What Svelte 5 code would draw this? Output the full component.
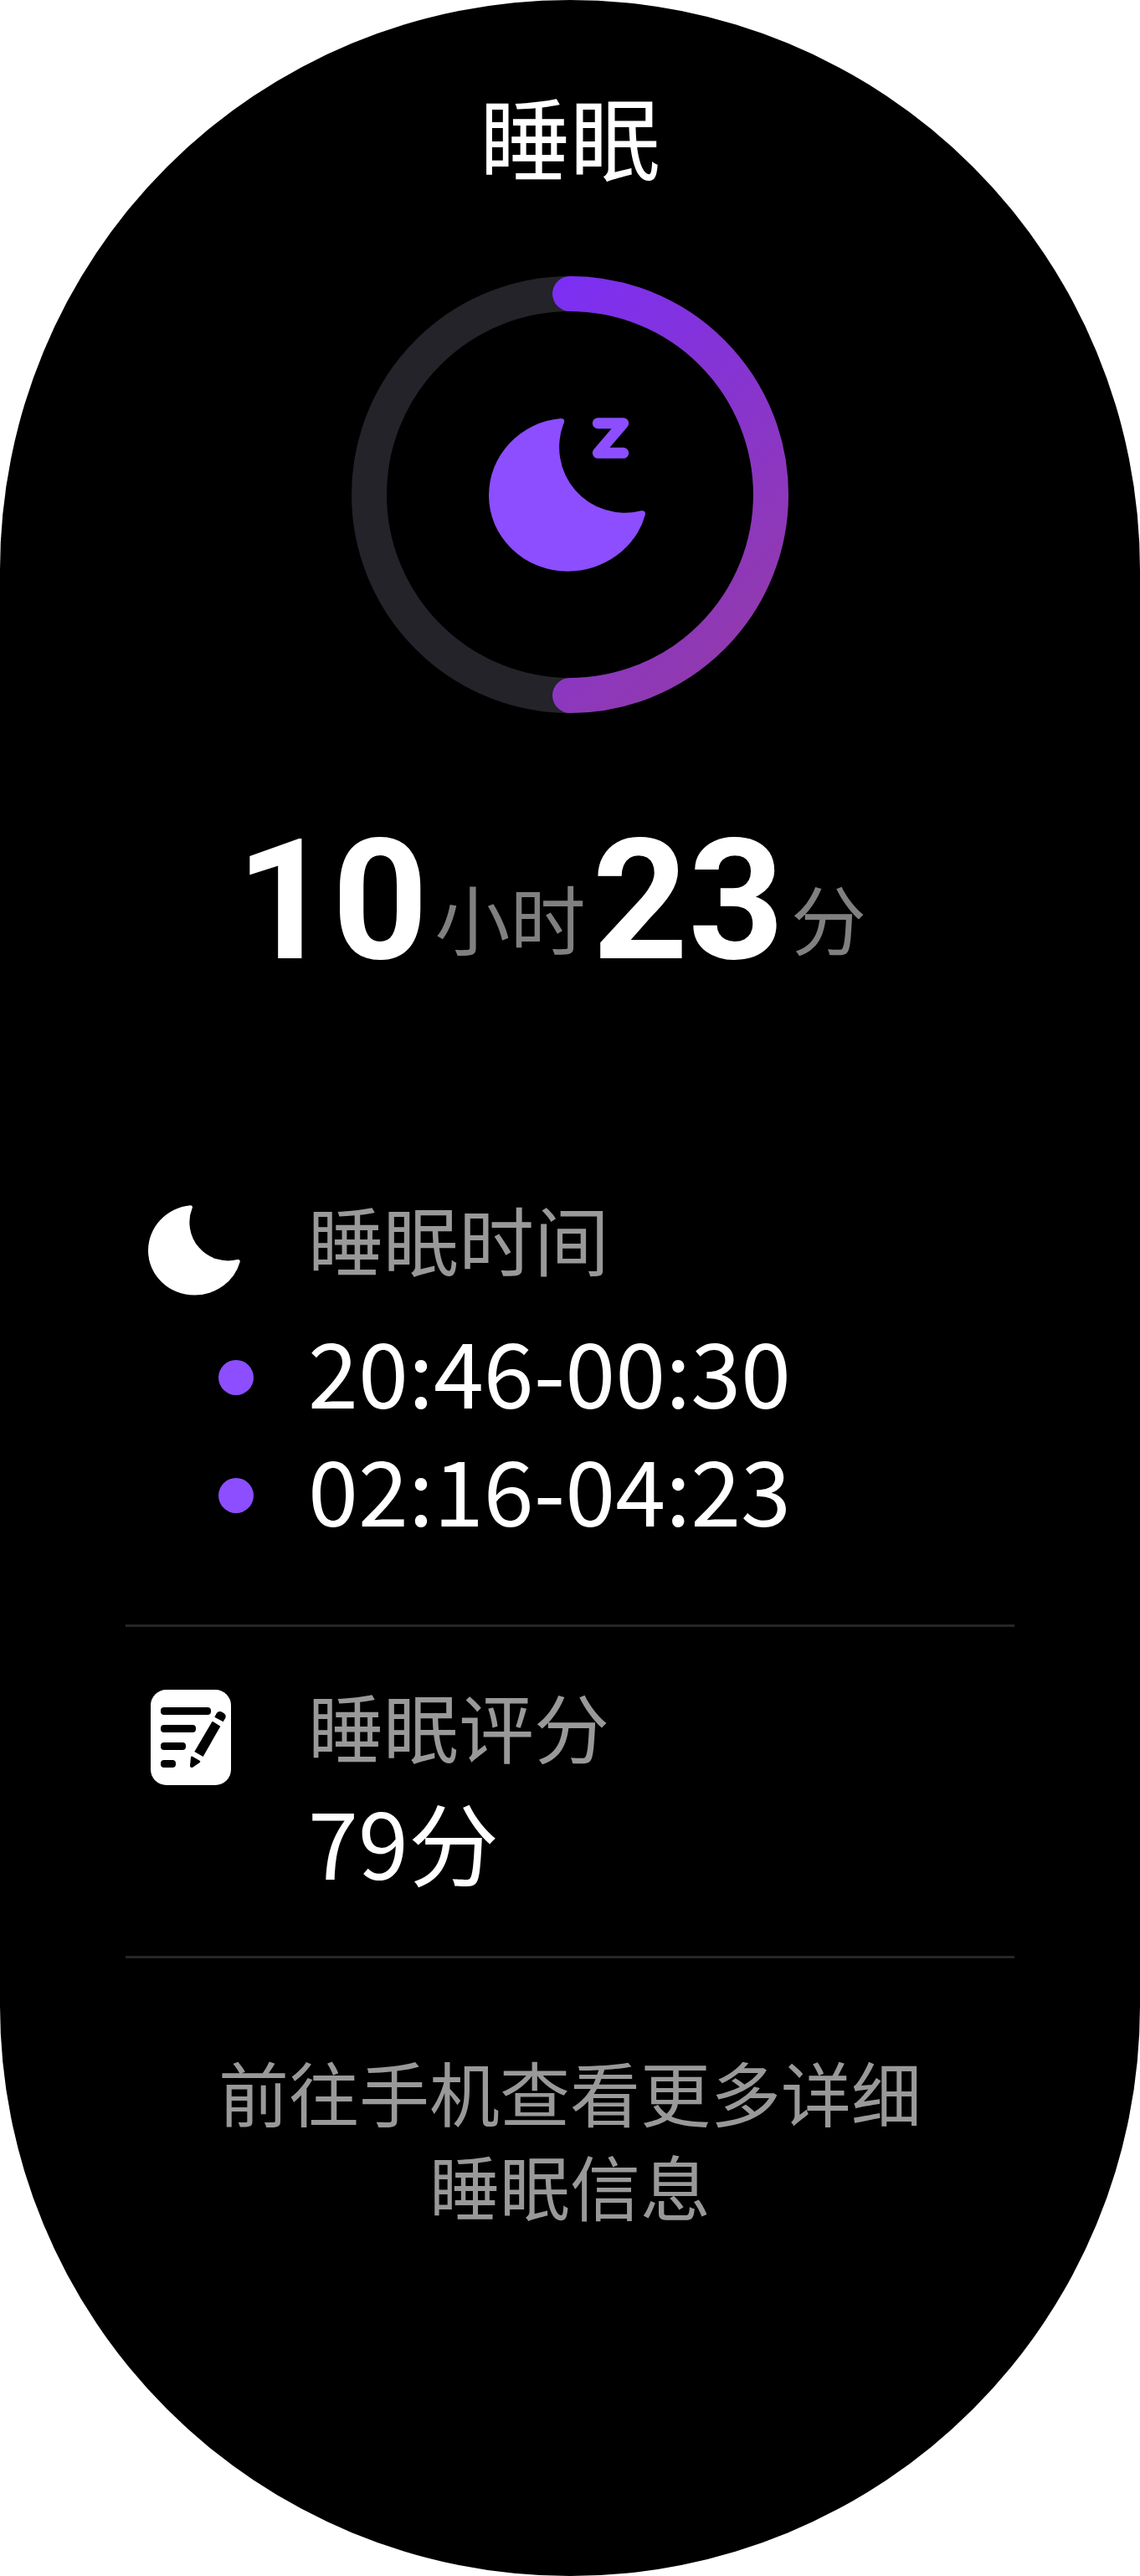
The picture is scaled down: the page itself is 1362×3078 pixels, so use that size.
<script>
  const periods = ['20:46-00:30', '02:16-04:23'];
</script>

{#snippet crescent()}
  <path
    d="M330 60Q345 60 342 74A235 235 0 0 0 617 391Q634 388 633 404A288 272 0 0 1 355 608A283 272 0 0 1 72 336A283 277 0 0 1 330 60Z"
  />
{/snippet}

<main class="watch">
  <h1>睡眠</h1>

  <svg class="ring" viewBox="0 0 522 522" role="img" aria-label="睡眠">
    <defs>
      <linearGradient id="progress" gradientUnits="userSpaceOnUse" x1="240" y1="0" x2="565" y2="325">
        <stop offset="0" stop-color="#7b2ff5" />
        <stop offset="1" stop-color="#9139b0" />
      </linearGradient>
    </defs>
    <circle class="track" cx="261" cy="261" r="240" />
    <path class="progress" d="M261 21A240 240 0 0 1 261 501" stroke="url(#progress)" />
    <g class="sleep" transform="translate(140 150) scale(.33333)">
      {@render crescent()}
      <path class="zed" d="M463 77H554L463 184H554" />
    </g>
  </svg>

  <p class="duration">
    <strong>10</strong><span>小时</span><strong>23</strong><span>分</span>
  </p>

  <section class="times">
    <svg class="icon" viewBox="72 60 562 549" aria-hidden="true">{@render crescent()}</svg>
    <div class="body">
      <h2>睡眠时间</h2>
      <ul>
        {#each periods as period}
          <li>{period}</li>
        {/each}
      </ul>
    </div>
  </section>

  <section class="score">
    <svg class="icon" viewBox="51 57 330 342" aria-hidden="true">
      <rect x="60" y="57" width="288" height="342" rx="56" />
      <g class="ink">
        <rect x="96" y="120" width="180" height="27" rx="12" />
        <rect x="96" y="183" width="126" height="27" rx="12" />
        <rect x="96" y="246" width="90" height="27" rx="12" />
        <rect x="96" y="309" width="54" height="27" rx="12" />
        <path d="M281 170L310 188L248 297L217 279Z" />
        <path d="M289 155L296 142Q302 133 313 136L322 141Q332 148 328 158L320 172Z" />
        <path d="M204 298Q206 294 211 297L238 313L237 317L211 335Q201 338 201 330Z" />
      </g>
    </svg>
    <div class="body">
      <h2>睡眠评分</h2>
      <p>79分</p>
    </div>
  </section>

  <p class="hint">前往手机查看更多详细睡眠信息</p>
</main>

<style>
  :global(body) {
    margin: 0;
    background: #fff;
  }

  .watch {
    box-sizing: border-box;
    display: flex;
    flex-direction: column;
    min-height: 100vh;
    padding: 91px 150px 380px;
    border-radius: 681px;
    background: #000;
    color: #fff;
    font-family: 'Noto Sans CJK SC', sans-serif;
  }

  h1,
  h2,
  p,
  ul {
    margin: 0;
    padding: 0;
    font-weight: 400;
  }

  h1 {
    font-size: 108px;
    line-height: 141px;
    text-align: center;
  }

  .ring {
    width: 522px;
    margin: 98px auto 0;
  }

  .track,
  .progress {
    fill: none;
    stroke-width: 42;
    stroke-linecap: round;
  }

  .track {
    stroke: #232329;
  }

  .sleep {
    fill: #8c4eff;
  }

  .zed {
    fill: none;
    stroke: #8c4eff;
    stroke-width: 39;
    stroke-linecap: round;
    stroke-linejoin: round;
  }

  .duration {
    display: flex;
    justify-content: center;
    align-items: flex-end;
    gap: 8px;
    margin-top: 146px;
    padding-right: 45px;
  }

  .duration strong {
    font-family: Roboto, sans-serif;
    font-size: 200px;
    font-weight: 700;
    line-height: 157px;
  }

  .duration span {
    color: #808080;
    font-size: 90px;
    line-height: 120px;
  }

  section {
    display: flex;
    border-bottom: 3px solid #262626;
  }

  .times {
    margin-top: 264px;
    padding-bottom: 93px;
  }

  .score {
    padding: 57px 0 67px;
  }

  .icon {
    width: 110px;
    height: 114px;
    margin: 18px 81px 0 27px;
    fill: #fff;
  }

  .ink {
    fill: #000;
  }

  h2 {
    color: #999;
    font-size: 90px;
    line-height: 120px;
  }

  ul {
    margin-top: 27px;
    list-style: none;
  }

  li,
  .score p {
    font-size: 108px;
    line-height: 141px;
  }

  li {
    display: flex;
    align-items: center;
  }

  li::before {
    content: '';
    width: 42px;
    height: 42px;
    margin: 18px 65px 0 -107px;
    border-radius: 50%;
    background: #8c4eff;
  }

  .score p {
    margin-top: 8px;
  }

  .hint {
    width: 100%;
    max-width: 880px;
    margin: 103px auto 0;
    color: #999;
    font-size: 84px;
    line-height: 112px;
    text-align: center;
  }
</style>
